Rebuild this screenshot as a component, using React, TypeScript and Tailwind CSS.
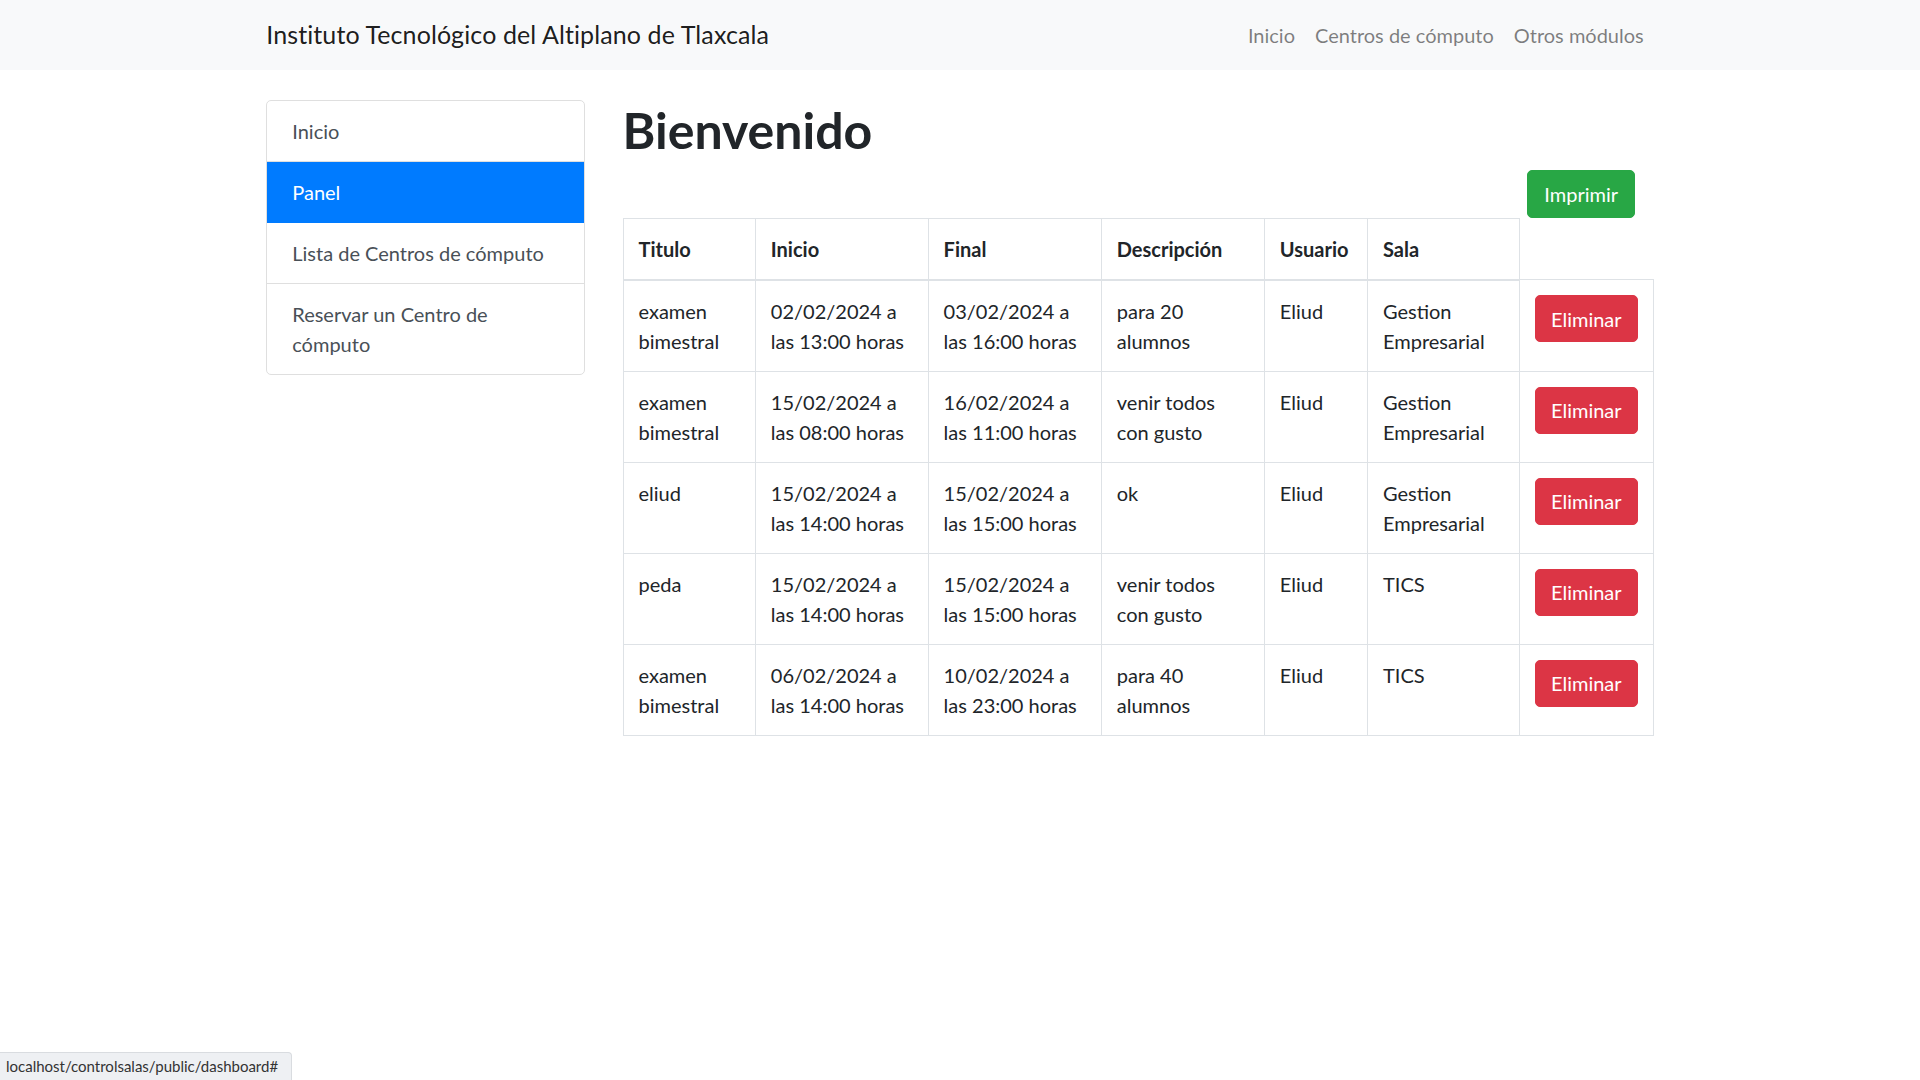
import React from "react";

const rows = [
  { t: "examen bimestral", i: "02/02/2024 a las 13:00 horas", f: "03/02/2024 a las 16:00 horas", d: "para 20 alumnos", u: "Eliud", s: "Gestion Empresarial" },
  { t: "examen bimestral", i: "15/02/2024 a las 08:00 horas", f: "16/02/2024 a las 11:00 horas", d: "venir todos con gusto", u: "Eliud", s: "Gestion Empresarial" },
  { t: "eliud", i: "15/02/2024 a las 14:00 horas", f: "15/02/2024 a las 15:00 horas", d: "ok", u: "Eliud", s: "Gestion Empresarial" },
  { t: "peda", i: "15/02/2024 a las 14:00 horas", f: "15/02/2024 a las 15:00 horas", d: "venir todos con gusto", u: "Eliud", s: "TICS" },
  { t: "examen bimestral", i: "06/02/2024 a las 14:00 horas", f: "10/02/2024 a las 23:00 horas", d: "para 40 alumnos", u: "Eliud", s: "TICS" },
];

const font = { fontFamily: "Lato, 'Open Sans', 'Noto Sans', sans-serif" };

export default function App() {
  const th = "border border-[#dee2e6] border-b-2 px-[15px] py-[15px] text-left align-bottom font-bold leading-[30px]";
  const td = "border border-[#dee2e6] px-[15px] py-[15px] align-top leading-[30px]";
  return (
    <div className="min-h-[1080px] bg-white text-[20px] text-[#212529]" style={font}>
      <nav className="bg-[#f8f9fa] h-[70px]">
        <div className="w-[1387.5px] mx-auto h-full flex items-center justify-between">
          <span className="text-[25px] leading-[37.5px] text-[rgba(0,0,0,0.9)] tracking-[0.1px]">
            Instituto Tecnológico del Altiplano de Tlaxcala
          </span>
          <div className="flex">
            {["Inicio", "Centros de cómputo", "Otros módulos"].map((l) => (
              <a key={l} href="#" className="px-[10px] leading-[30px] text-[rgba(0,0,0,0.5)]">
                {l}
              </a>
            ))}
          </div>
        </div>
      </nav>

      <div className="w-[1387.5px] mx-auto mt-[30px] flex gap-[37.5px] items-start">
        <div className="w-[318.75px] shrink-0 flex flex-col border border-[#dfdfdf] rounded-[5px] overflow-hidden text-[#495057]">
          <a href="#" className="px-[25px] py-[15px] leading-[30px] border-b border-[#dfdfdf]">Inicio</a>
          <a href="#" className="px-[25px] py-[15px] leading-[30px] bg-[#007bff] text-white border-b border-[#007bff]">Panel</a>
          <a href="#" className="px-[25px] py-[15px] leading-[30px] border-b border-[#dfdfdf]">Lista de Centros de cómputo</a>
          <a href="#" className="px-[25px] py-[15px] leading-[30px]">Reservar un Centro de cómputo</a>
        </div>

        <div className="flex-1 min-w-0">
          <h1 className="text-[50px] leading-[60px] font-bold mb-[10px] text-[#212529]">Bienvenido</h1>
          <div className="flex justify-end pr-[18.75px]">
            <button className="bg-[#28a745] text-white rounded-[5px] px-[16px] py-[7.75px] leading-[30px] border border-[#28a745]">
              Imprimir
            </button>
          </div>
          <table className="w-full table-fixed border-collapse">
            <colgroup>
              <col className="w-[132.3px]" />
              <col className="w-[172.8px]" />
              <col className="w-[173.2px]" />
              <col className="w-[163px]" />
              <col className="w-[103.2px]" />
              <col className="w-[151.8px]" />
              <col />
            </colgroup>
            <thead>
              <tr>
                <th className={th}>Titulo</th>
                <th className={th}>Inicio</th>
                <th className={th}>Final</th>
                <th className={th}>Descripción</th>
                <th className={th}>Usuario</th>
                <th className={th}>Sala</th>
              </tr>
            </thead>
            <tbody>
              {rows.map((r, k) => (
                <tr key={k}>
                  <td className={td}>{r.t}</td>
                  <td className={td}>{r.i}</td>
                  <td className={td}>{r.f}</td>
                  <td className={td}>{r.d}</td>
                  <td className={td}>{r.u}</td>
                  <td className={td}>{r.s}</td>
                  <td className={td}>
                    <button className="bg-[#dc3545] text-white rounded-[5px] px-[15px] py-[7.5px] leading-[30px] border border-[#dc3545] w-[103px]">
                      Eliminar
                    </button>
                  </td>
                </tr>
              ))}
            </tbody>
          </table>
        </div>
      </div>

      <div
        className="fixed left-0 bottom-0 h-[28px] w-[292px] flex items-center pl-[6px] bg-[#eef0f3] border-t border-r border-[#d9dce0] rounded-tr-[4px] text-[15px] text-[#333]"
        style={{ fontFamily: "Lato, 'Noto Sans', sans-serif" }}
      >
        localhost/controlsalas/public/dashboard#
      </div>
    </div>
  );
}
